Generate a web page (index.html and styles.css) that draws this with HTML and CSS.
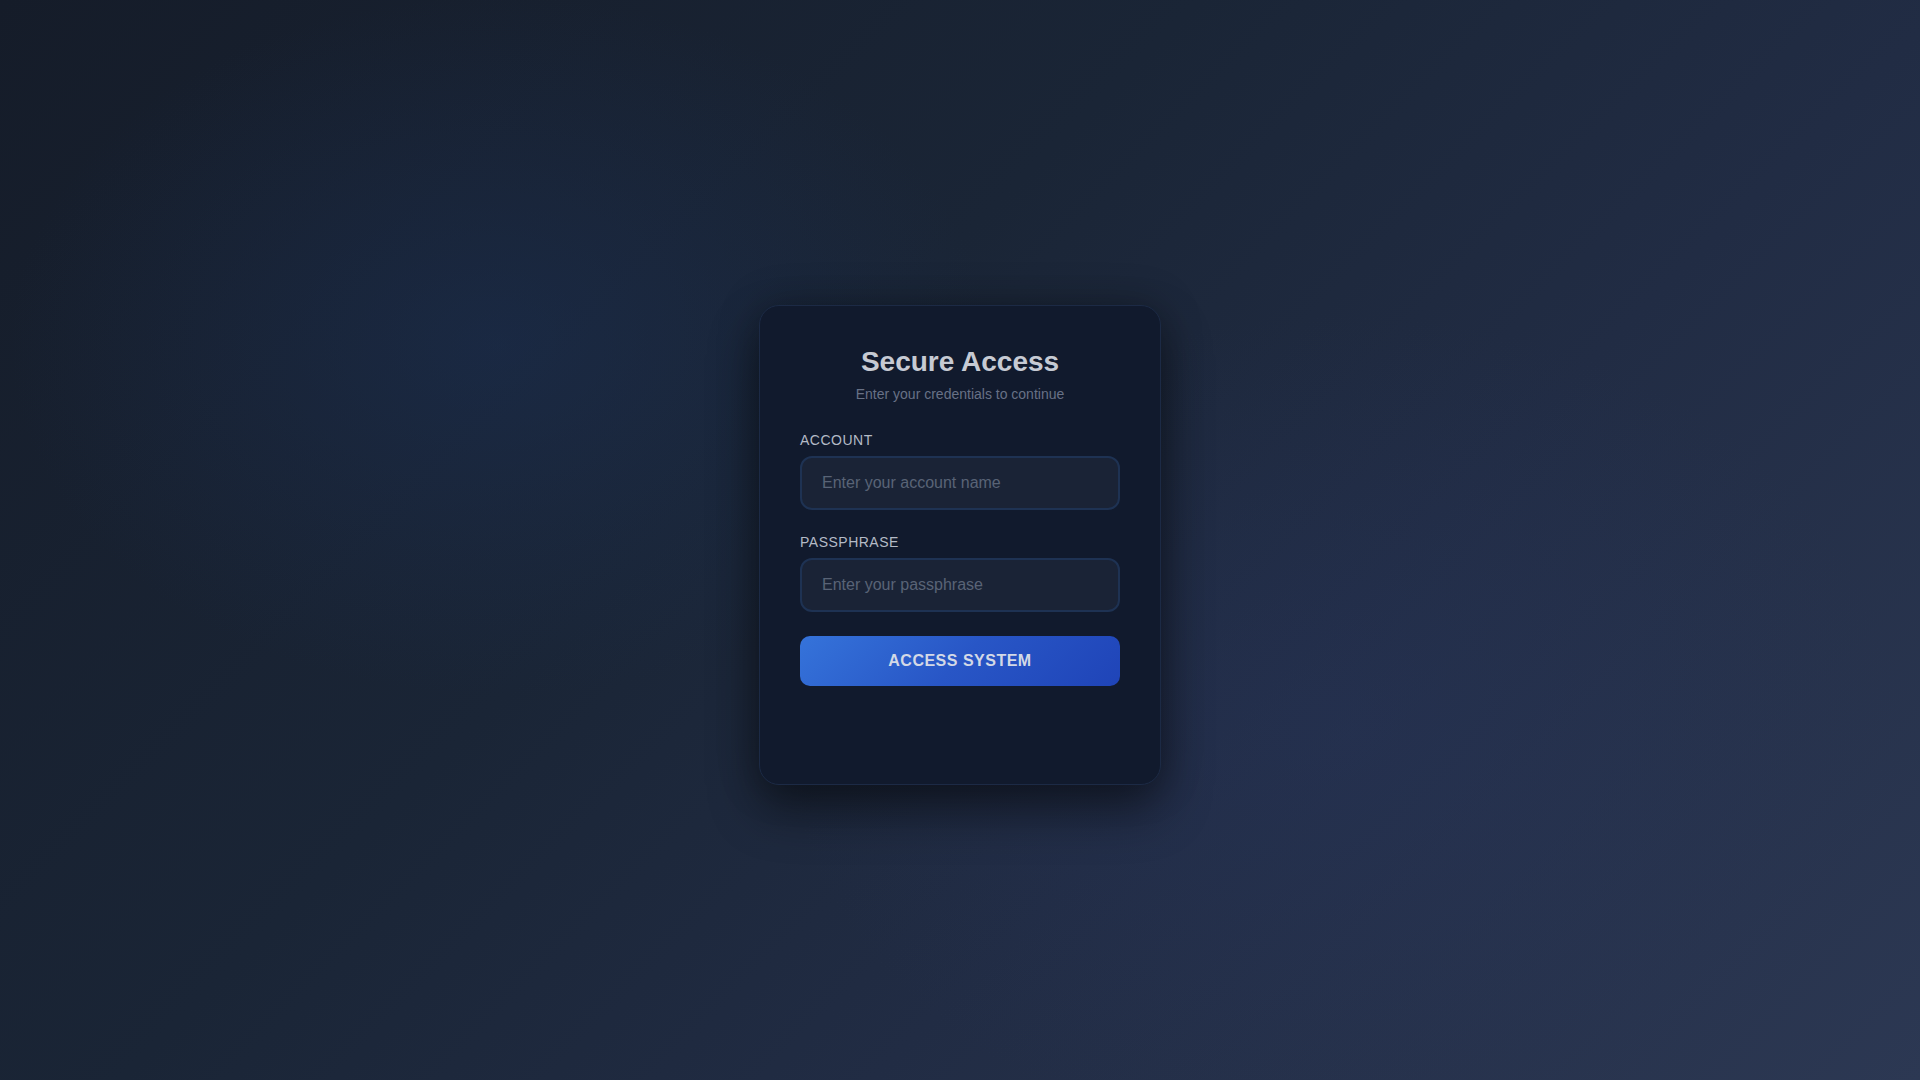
FILE: index.html
```html
<!DOCTYPE html>
<html lang="en">
<head>
<meta charset="utf-8">
<title>Secure Access</title>
<link rel="stylesheet" href="styles.css">
</head>
<body>
<main class="page">
  <form class="card">
    <header class="card-header">
      <h1 class="title">Secure Access</h1>
      <p class="subtitle">Enter your credentials to continue</p>
    </header>
    <div class="field">
      <label class="label" for="account">ACCOUNT</label>
      <input class="input" id="account" type="text" placeholder="Enter your account name">
    </div>
    <div class="field">
      <label class="label" for="pass">PASSPHRASE</label>
      <input class="input" id="pass" type="password" placeholder="Enter your passphrase">
    </div>
    <button class="button" type="button">ACCESS SYSTEM</button>
    <div class="card-footer"></div>
  </form>
</main>
</body>
</html>
```

FILE: styles.css
```css
* { box-sizing: border-box; }
html, body { margin: 0; padding: 0; height: 100%; }
body {
  font-family: "Liberation Sans", Arial, sans-serif;
  background:
    radial-gradient(ellipse 700px 500px at 26% 32%, rgba(28, 50, 90, 0.42), rgba(28, 50, 90, 0) 70%),
    radial-gradient(ellipse 800px 600px at 70% 68%, rgba(40, 54, 96, 0.32), rgba(40, 54, 96, 0) 70%),
    linear-gradient(135deg, #151c29 0%, #1a2536 40%, #212c44 65%, #2c3853 100%);
  color: #c8ccd4;
}
.page {
  height: 100vh;
  display: flex;
  align-items: flex-start;
  justify-content: center;
  padding-top: 305px;
}
.card {
  width: 402px;
  padding: 40px 40px 40px;
  background: #111a2d;
  border: 1px solid #1c2a45;
  border-radius: 20px;
  box-shadow: 0 25px 50px rgba(0, 0, 0, 0.45), 0 0 40px rgba(0, 0, 0, 0.25);
  display: flex;
  flex-direction: column;
}
.card-header { text-align: center; margin-bottom: 30px; }
.title {
  margin: 0 0 8px;
  font-size: 28px;
  font-weight: 700;
  color: #c6cad3;
  line-height: 32px;
}
.subtitle {
  margin: 0;
  font-size: 14px;
  line-height: 16px;
  color: #687186;
}
.field { display: flex; flex-direction: column; margin-bottom: 24px; }
.label {
  font-size: 14px;
  line-height: 16px;
  letter-spacing: 0.5px;
  color: #b4bac6;
  margin-bottom: 8px;
}
.input {
  height: 54px;
  width: 100%;
  background: #1a2336;
  border: 2px solid #1e3253;
  border-radius: 12px;
  padding: 0 20px;
  font-family: "Liberation Sans", Arial, sans-serif;
  font-size: 16px;
  color: #c8ccd4;
  outline: none;
}
.input::placeholder { color: #596376; }
.button {
  height: 50px;
  width: 100%;
  border: none;
  border-radius: 10px;
  background: linear-gradient(135deg, #3573da 0%, #2856c6 50%, #1f44b8 100%);
  color: #d3d9e6;
  font-family: "Liberation Sans", Arial, sans-serif;
  font-size: 16px;
  font-weight: 700;
  letter-spacing: 0.5px;
  cursor: pointer;
}
.card-footer { height: 58px; }
```
